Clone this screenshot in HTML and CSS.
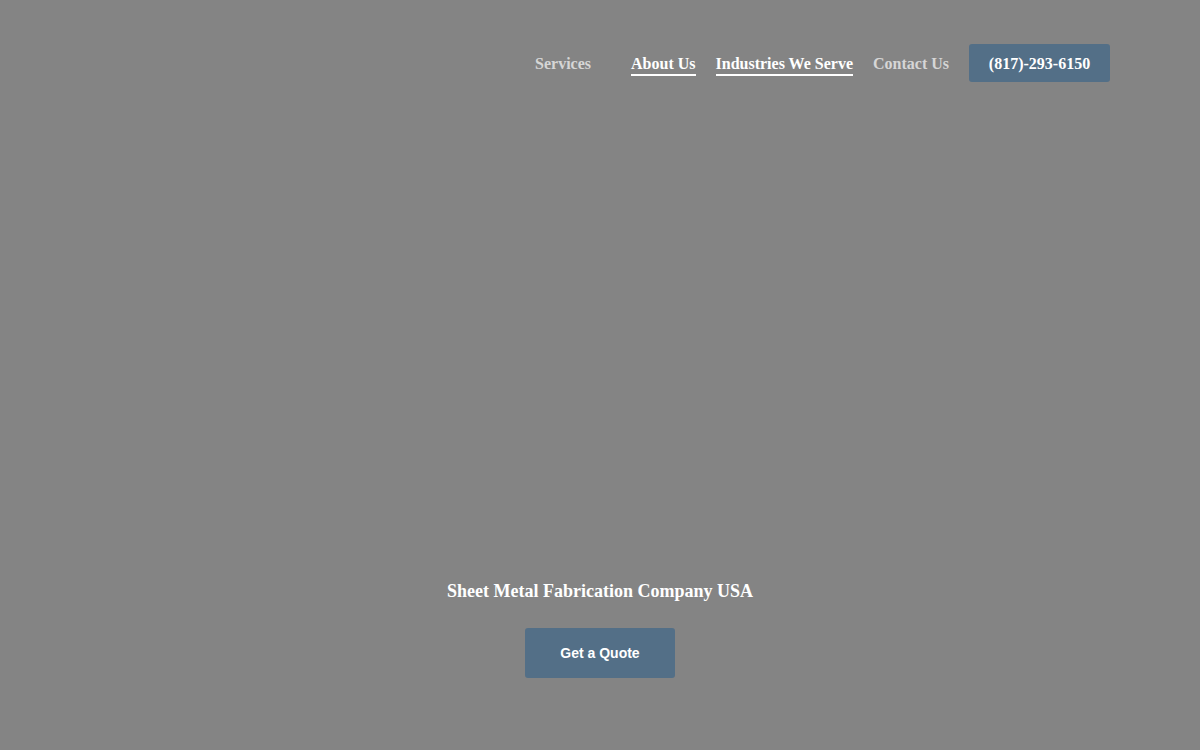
FILE: index.html
```html
<!DOCTYPE html>
<html lang="en">
<head>
    <meta charset="UTF-8">
    <meta name="viewport" content="width=device-width, initial-scale=1.0">
    <title>Sheet Metal Fabrication Company USA</title>
    <link rel="stylesheet" href="styles.css">
</head>
<body>
    <header id="navbar">
        <nav>
            <ul>
                <li class="nav-dim services"><a href="#">Services</a></li>
                <li class="nav-active"><a href="#">About Us</a></li>
                <li class="nav-active"><a href="#">Industries We Serve</a></li>
                <li class="nav-dim"><a href="#">Contact Us</a></li>
            </ul>
        </nav>
        <a href="tel:8172936150" id="phone">(817)-293-6150</a>
    </header>

    <section class="hero">
        <h1 class="hero-title">Sheet Metal Fabrication Company USA</h1>
        <a href="#" class="quote-button">Get a Quote</a>
    </section>
</body>
</html>
```

FILE: styles.css
```css
body {
    margin: 0;
    font-family: "Liberation Serif", "Times New Roman", serif;
    background-color: #848484;
    height: 750px;
    overflow: hidden;
}

#navbar {
    display: flex;
    align-items: center;
    justify-content: flex-end;
    padding: 44px 90px 0 0;
}

nav {
    margin-top: 4px;
}

nav ul {
    list-style-type: none;
    display: flex;
    align-items: center;
    margin: 0;
    padding: 0;
}

nav ul li {
    margin-right: 20px;
}

nav ul li.services {
    margin-right: 40px;
}

nav ul li a {
    font-size: 16px;
    font-weight: bold;
    text-decoration: none;
    display: block;
    line-height: 20px;
}

.nav-dim a {
    color: #d6d6d6;
    padding-bottom: 2px;
}

.nav-active a {
    color: #fff;
    border-bottom: 2px solid #fff;
}

#phone {
    display: block;
    width: 141px;
    height: 37px;
    padding-top: 1px;
    line-height: 37px;
    text-align: center;
    background-color: #536f87;
    color: #fff;
    font-size: 16px;
    font-weight: bold;
    text-decoration: none;
    border-radius: 3px;
}

.hero {
    display: flex;
    flex-direction: column;
    align-items: center;
    padding-top: 497px;
}

.hero-title {
    margin: 0;
    color: #fff;
    font-size: 18px;
    font-weight: bold;
    line-height: 24px;
}

.quote-button {
    display: block;
    margin-top: 25px;
    width: 150px;
    height: 50px;
    line-height: 50px;
    text-align: center;
    background-color: #536f87;
    color: #fff;
    font-family: "Liberation Sans", Arial, sans-serif;
    font-size: 14px;
    font-weight: bold;
    text-decoration: none;
    border-radius: 3px;
}
```
